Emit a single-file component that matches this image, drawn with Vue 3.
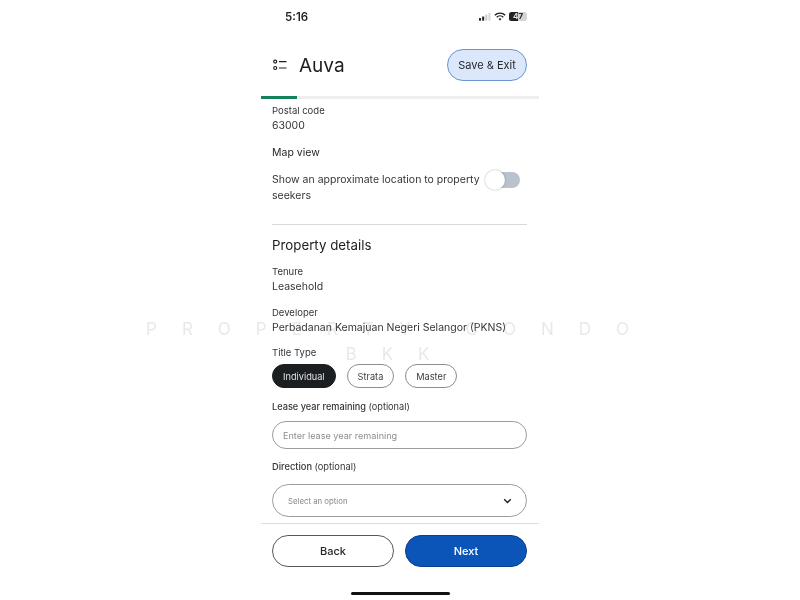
<template>
  <div class="page">
    <div class="phone">
      <!-- status bar -->
      <div class="status">
        <span class="time">5:16</span>
        <div class="status-icons">
          <svg width="12" height="9" viewBox="0 0 13 9">
            <rect x="0" y="6" width="2.2" height="3" rx="0.5" fill="#222" />
            <rect x="3.4" y="4.4" width="2.2" height="4.6" rx="0.5" fill="#222" />
            <rect x="6.8" y="2.4" width="2.2" height="6.6" rx="0.5" fill="#c9c9c9" />
            <rect x="10.2" y="0.4" width="2.2" height="8.6" rx="0.5" fill="#d8d8d8" />
          </svg>
          <svg width="12" height="9" viewBox="0 0 12 9" fill="none" stroke="#1c1c1c" stroke-width="1.4">
            <path d="M0.8 3.3a7.4 7.4 0 0 1 10.4 0" />
            <path d="M2.7 5.2a4.7 4.7 0 0 1 6.6 0" />
            <path d="M6 8.6 4.5 7a2.1 2.1 0 0 1 3 0z" fill="#1c1c1c" stroke="none" />
          </svg>
          <div class="battery">
            <div class="battery-fill"></div>
            <span>47</span>
          </div>
        </div>
      </div>

      <!-- header -->
      <div class="header">
        <svg class="menu-icon" width="14" height="12" viewBox="0 0 14 12" fill="none" stroke="#1d1f22" stroke-width="1.2">
          <circle cx="2.2" cy="2.6" r="1.5" />
          <circle cx="2.2" cy="9" r="1.5" />
          <path d="M6 2.6h7.5M6 9h7.5" />
        </svg>
        <span class="title">Auva</span>
        <button class="save-btn">Save &amp; Exit</button>
      </div>

      <div class="progress"><div class="progress-fill" :style="{ width: progress + '%' }"></div></div>

      <!-- form -->
      <div class="content">
        <div class="label">Postal code</div>
        <div class="value">63000</div>

        <div class="map-title">Map view</div>
        <div class="map-row">
          <p>Show an approximate location to property seekers</p>
          <div class="toggle"><div class="knob"></div></div>
        </div>

        <div class="divider"></div>

        <h2>Property details</h2>

        <div class="label tenure">Tenure</div>
        <div class="value">Leasehold</div>

        <div class="label developer">Developer</div>
        <div class="value">Perbadanan Kemajuan Negeri Selangor (PKNS)</div>

        <div class="label title-type">Title Type</div>
        <div class="chips">
          <span
            v-for="chip in titleTypes"
            :key="chip"
            :class="['chip', { active: chip === selectedType }]"
          >{{ chip }}</span>
        </div>

        <div class="label lease">Lease year remaining <span class="optional">(optional)</span></div>
        <div class="input">Enter lease year remaining</div>

        <div class="label direction">Direction <span class="optional">(optional)</span></div>
        <div class="select">
          <span>Select an option</span>
          <svg width="9" height="6" viewBox="0 0 9 6" fill="none" stroke="#1d1f22" stroke-width="1.4">
            <path d="M1.2 1.2l3.3 3.2 3.3-3.2" />
          </svg>
        </div>
      </div>

      <!-- footer -->
      <div class="footer">
        <button class="btn back">Back</button>
        <button class="btn next">Next</button>
      </div>
      <div class="home-bar"></div>
    </div>

    <!-- watermark -->
    <div class="watermark one">PROPERTY CONDO</div>
    <div class="watermark two">BKK</div>
  </div>
</template>

<script setup>
const progress = 13
const titleTypes = ['Individual', 'Strata', 'Master']
const selectedType = 'Individual'
</script>

<style>
html,
body {
  background: #fff;
}
</style>

<style scoped>
.page {
  position: relative;
  width: 800px;
  height: 600px;
  overflow: hidden;
  background: #fff;
  font-family: Inter, "Noto Sans", sans-serif;
  color: #24272b;
}

.phone {
  width: 278px;
  height: 600px;
  margin: 0 auto;
  display: flex;
  flex-direction: column;
}

.status {
  height: 33px;
  padding: 0 12px 0 24px;
  display: flex;
  align-items: center;
  justify-content: space-between;
}

.time {
  font-size: 11.5px;
  font-weight: 600;
  color: #222;
}

.status-icons {
  display: flex;
  align-items: center;
  gap: 3px;
}

.battery {
  position: relative;
  width: 18px;
  height: 9px;
  border-radius: 2.5px;
  background: #d4d4d4;
  overflow: hidden;
}

.battery-fill {
  width: 9px;
  height: 9px;
  background: #222;
}

.battery span {
  position: absolute;
  inset: 0;
  text-align: center;
  font-size: 8px;
  line-height: 9px;
  font-weight: 700;
  color: #fff;
  mix-blend-mode: difference;
}

.header {
  height: 63px;
  padding: 0 12px 0 12px;
  display: flex;
  align-items: center;
}

.menu-icon {
  margin-right: 12px;
}

.title {
  margin-top: 1px;
  font-size: 19px;
  color: #1b1d20;
}

.save-btn {
  margin-left: auto;
  width: 80px;
  height: 32px;
  border: 1px solid #6d93d3;
  border-radius: 16px;
  background: #dbe8fb;
  font-family: inherit;
  font-size: 11px;
  color: #24272b;
  padding: 0;
}

.progress {
  height: 3px;
  background: #eeeeee;
}

.progress-fill {
  height: 100%;
  background: #12825a;
}

.content {
  flex: 1;
  padding: 5px 12px 0 11px;
  overflow: hidden;
}

.label {
  font-size: 9.5px;
  line-height: 14px;
  color: #33363a;
}

.value {
  font-size: 10.5px;
  line-height: 16px;
  color: #33363a;
}

.map-title {
  margin-top: 11px;
  font-size: 10.5px;
  line-height: 15px;
  color: #24272b;
}

.map-row {
  margin-top: 12px;
  display: flex;
  align-items: flex-start;
}

.map-row p {
  margin: 0;
  width: 212px;
  font-size: 10.5px;
  line-height: 16px;
  color: #33363a;
}

.toggle {
  position: relative;
  width: 34px;
  height: 16px;
  margin: 0 0 0 2px;
  border-radius: 8px;
  background: #b9c2cd;
}

.knob {
  position: absolute;
  left: -1px;
  top: -2px;
  width: 20px;
  height: 20px;
  border-radius: 50%;
  background: #fff;
  box-shadow: 0 0 2px rgba(0, 0, 0, 0.35);
}

.divider {
  margin-top: 20px;
  height: 1px;
  background: #d9d9d9;
}

h2 {
  margin: 11px 0 0;
  font-size: 13.3px;
  line-height: 18px;
  font-weight: 400;
  color: #1b1d20;
}

.tenure {
  margin-top: 11px;
}

.developer {
  margin-top: 11px;
}

.title-type {
  margin-top: 10px;
}

.chips {
  margin-top: 4px;
  display: flex;
  gap: 11px;
}

.chip {
  height: 24px;
  padding: 0 10px;
  display: flex;
  align-items: center;
  border: 1px solid #8a8d90;
  border-radius: 12px;
  box-sizing: border-box;
  font-size: 9.2px;
  color: #3b3e42;
}

.chip.active {
  background: #1c1f22;
  border-color: #1c1f22;
  color: #e0e0e0;
}

.lease {
  margin-top: 12px;
  font-weight: 500;
  font-size: 9.2px;
}

.direction {
  margin-top: 11px;
  font-weight: 500;
  font-size: 9.3px;
}

.optional {
  font-weight: 400;
}

.input {
  margin-top: 7px;
  height: 28px;
  padding-left: 10px;
  display: flex;
  align-items: center;
  box-sizing: border-box;
  border: 1px solid #9a9c9e;
  border-radius: 14px;
  font-size: 9.1px;
  color: #8b8e91;
}

.select {
  margin-top: 10px;
  height: 33px;
  padding: 0 14px 0 15px;
  display: flex;
  align-items: center;
  justify-content: space-between;
  box-sizing: border-box;
  border: 1px solid #9a9c9e;
  border-radius: 17px;
  font-size: 7.8px;
  color: #85888b;
}

.footer {
  height: 69px;
  box-sizing: border-box;
  padding: 11px 12px 0 11px;
  display: flex;
  gap: 11px;
  border-top: 1px solid #dcdcdc;
}

.btn {
  flex: 1;
  height: 32px;
  border-radius: 16px;
  font-family: inherit;
  font-size: 11px;
  font-weight: 500;
  padding: 0;
}

.back {
  background: #fff;
  border: 1px solid #55585c;
  color: #24272b;
}

.next {
  background: #0b54b8;
  border: 1px solid #0a3f8c;
  color: #fff;
}

.home-bar {
  align-self: center;
  width: 99px;
  height: 3px;
  margin-bottom: 5px;
  border-radius: 2px;
  background: #111;
}

.watermark {
  position: absolute;
  left: 0;
  width: 800px;
  text-align: center;
  color: rgba(120, 120, 120, 0.17);
  pointer-events: none;
  white-space: pre;
}

.watermark.one {
  top: 318px;
  font-size: 17px;
  line-height: 22px;
  letter-spacing: 25px;
}

.watermark.two {
  top: 343px;
  font-size: 17px;
  line-height: 22px;
  letter-spacing: 25px;
}
</style>
